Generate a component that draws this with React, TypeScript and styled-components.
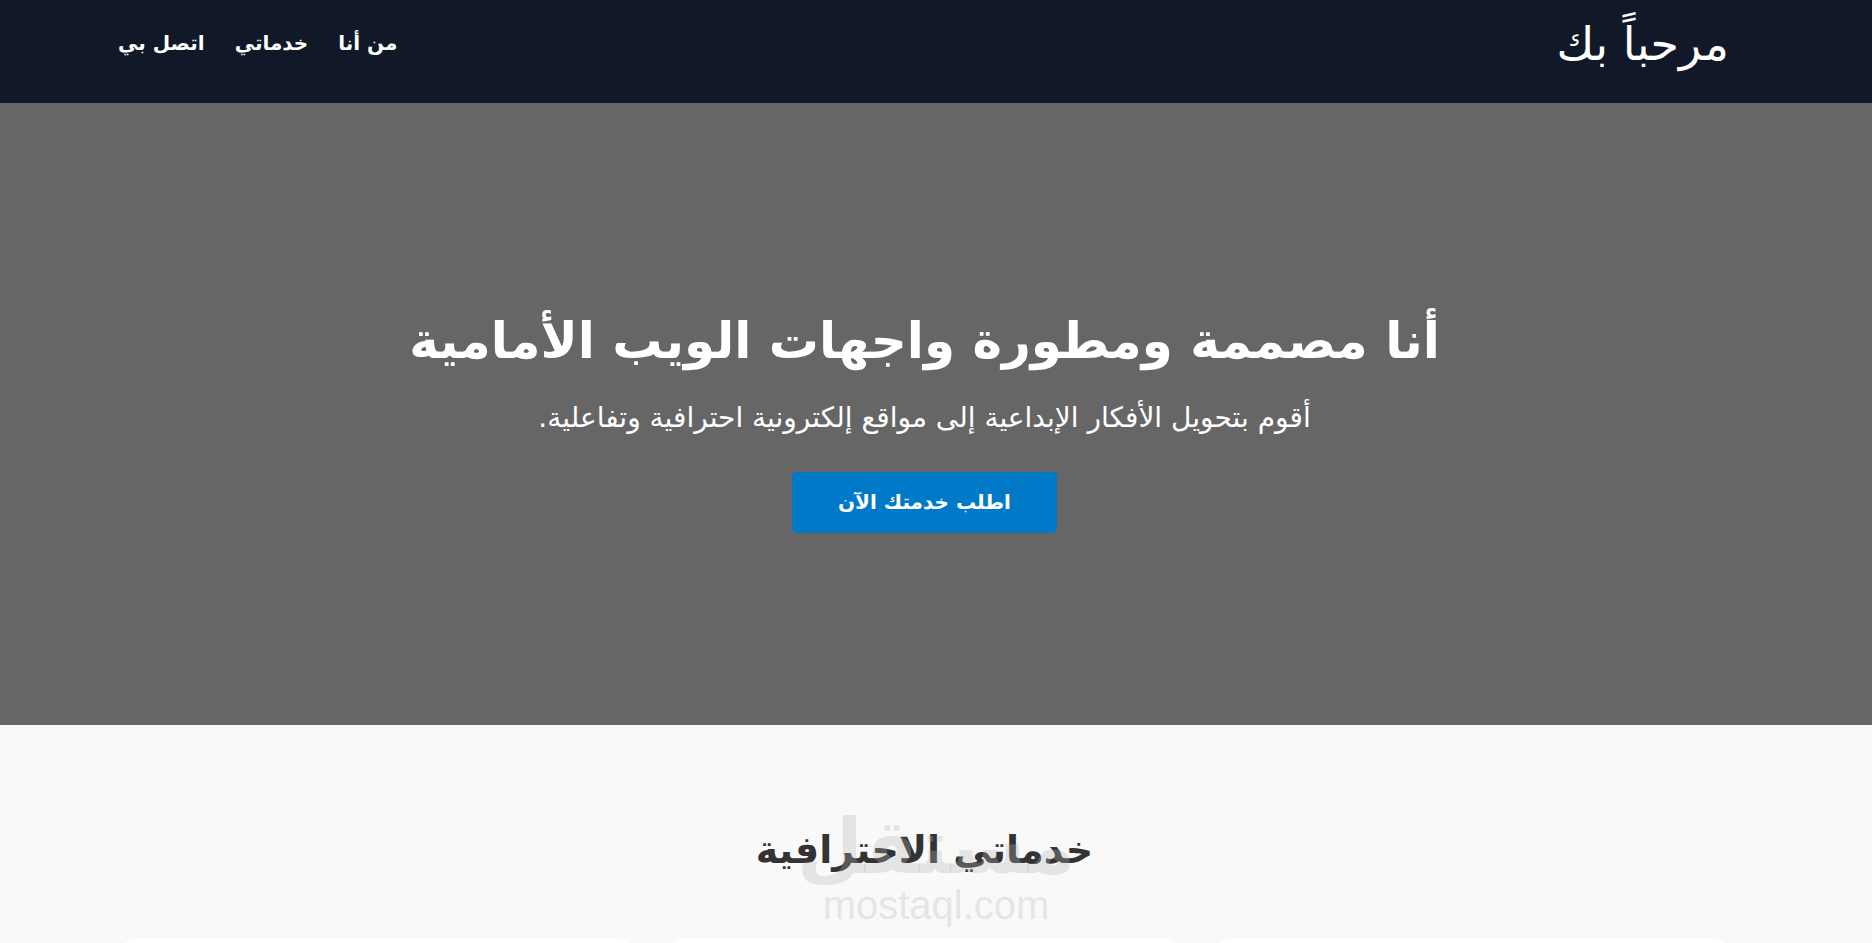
import React from "react";
import styled, { createGlobalStyle } from "styled-components";

const GlobalStyle = createGlobalStyle`
  * { box-sizing: border-box; }
  html, body { margin: 0; padding: 0; }
  body {
    font-family: "DejaVu Sans", "Noto Sans", sans-serif;
    background: #f9f9f9;
    color: #333;
    direction: rtl;
    overflow: hidden;
  }
`;

const Header = styled.header`
  height: 103px;
  background: #111827;
  color: #fff;
  display: flex;
  align-items: center;
  justify-content: space-between;
  padding: 0 143px 0 118px;
`;

const Logo = styled.h1`
  margin: 0 0 14px;
  font-size: 46px;
  font-weight: 400;
  line-height: 1.2;
`;

const Nav = styled.nav`
  display: flex;
  gap: 30px;
  margin-bottom: 18px;
`;

const NavLink = styled.a`
  color: #fff;
  text-decoration: none;
  font-size: 20px;
  font-weight: 700;
`;

const Hero = styled.section`
  height: 622px;
  padding: 17px 23px 0 0;
  background: #666;
  color: #fff;
  display: flex;
  flex-direction: column;
  align-items: center;
  justify-content: center;
  text-align: center;
`;

const HeroTitle = styled.h2`
  margin: 0 0 32px;
  font-size: 50px;
  font-weight: 700;
  line-height: 1.16;
`;

const HeroText = styled.p`
  margin: 0 0 38px;
  font-size: 28px;
  line-height: 1.16;
`;

const CTA = styled.a`
  display: inline-block;
  background: #0079c8;
  color: #fff;
  text-decoration: none;
  font-size: 20px;
  font-weight: 700;
  line-height: 1.16;
  padding: 19px 46px;
  border-radius: 5px;
`;

const Services = styled.section`
  position: relative;
  padding: 103px 146px 0 123px;
  background: #f9f9f9;
`;

const SectionTitle = styled.h2`
  margin: 0 0 67px;
  text-align: center;
  font-size: 38px;
  font-weight: 700;
  line-height: 1.16;
  color: #333;
`;

const Cards = styled.div`
  display: grid;
  grid-template-columns: repeat(3, 1fr);
  gap: 40px;
`;

const Card = styled.div`
  height: 260px;
  background: #fff;
  border-radius: 10px;
`;

const Watermark = styled.div`
  position: absolute;
  left: 50%;
  top: 84px;
  transform: translateX(-50%);
  display: flex;
  flex-direction: column;
  align-items: center;
  color: rgba(180, 180, 180, 0.3);
  pointer-events: none;
  z-index: 1;
`;

const WatermarkLogo = styled.span`
  font-size: 76px;
  font-weight: 700;
  line-height: 1;
`;

const WatermarkUrl = styled.span`
  font-family: "Liberation Sans", Arial, sans-serif;
  font-size: 40px;
  line-height: 1;
  direction: ltr;
`;

export default function App() {
  return (
    <>
      <GlobalStyle />
      <Header>
        <Logo>مرحباً بك</Logo>
        <Nav>
          <NavLink href="#about">من أنا</NavLink>
          <NavLink href="#services">خدماتي</NavLink>
          <NavLink href="#contact">اتصل بي</NavLink>
        </Nav>
      </Header>
      <Hero>
        <HeroTitle>أنا مصممة ومطورة واجهات الويب الأمامية</HeroTitle>
        <HeroText>أقوم بتحويل الأفكار الإبداعية إلى مواقع إلكترونية احترافية وتفاعلية.</HeroText>
        <CTA href="#contact">اطلب خدمتك الآن</CTA>
      </Hero>
      <Services>
        <SectionTitle>خدماتي الاحترافية</SectionTitle>
        <Watermark>
          <WatermarkLogo>مستقل</WatermarkLogo>
          <WatermarkUrl>mostaql.com</WatermarkUrl>
        </Watermark>
        <Cards>
          <Card />
          <Card />
          <Card />
        </Cards>
      </Services>
    </>
  );
}
